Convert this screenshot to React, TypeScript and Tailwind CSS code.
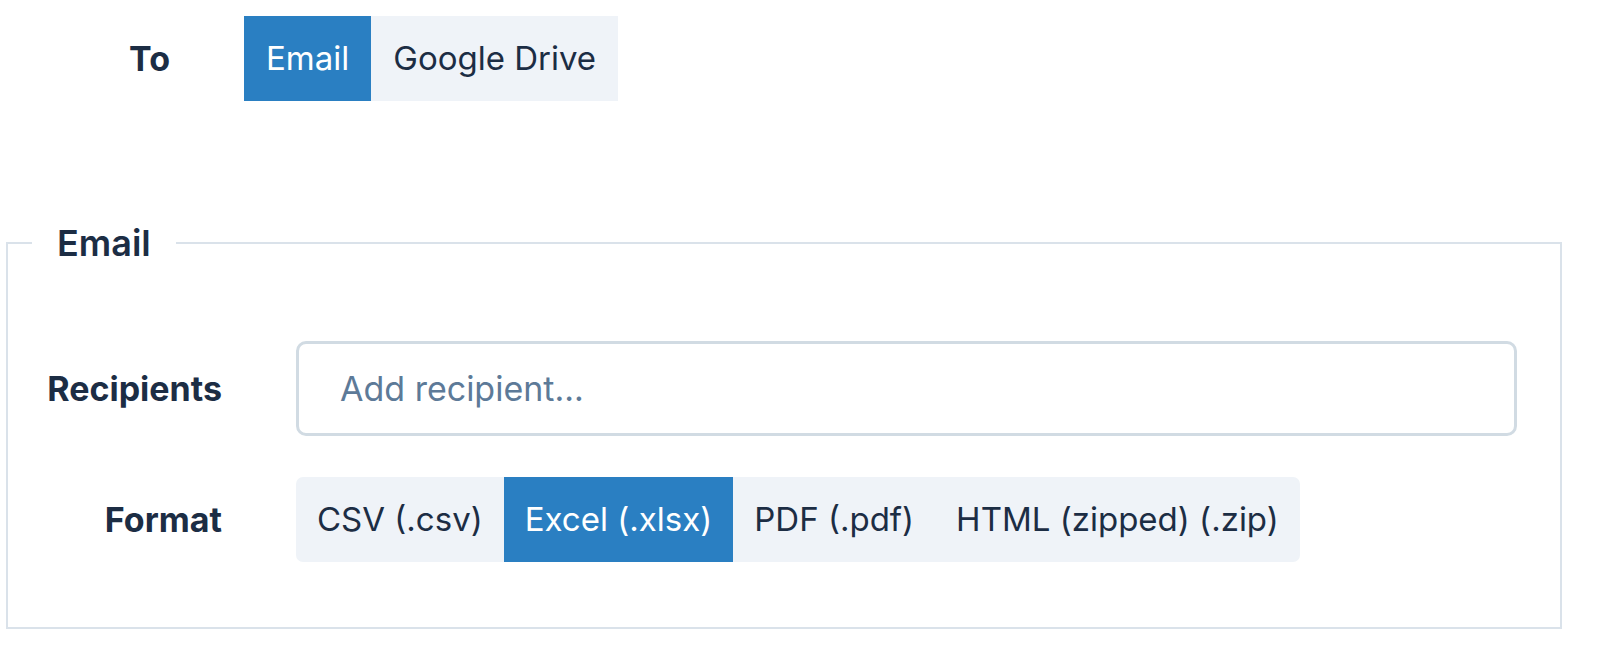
import React, { useState } from 'react';

const font = { fontFamily: 'Inter, "Noto Sans", sans-serif' };

export default function App() {
  const [dest, setDest] = useState('email');
  const [format, setFormat] = useState('xlsx');

  const formats = [
    { id: 'csv', label: 'CSV (.csv)' },
    { id: 'xlsx', label: 'Excel (.xlsx)' },
    { id: 'pdf', label: 'PDF (.pdf)' },
    { id: 'zip', label: 'HTML (zipped) (.zip)' },
  ];

  return (
    <div className="w-[1606px] h-[650px] bg-white text-[#1c2d44]" style={font}>
      {/* Destination */}
      <div className="flex items-center pt-4">
        <div className="w-[170px] text-right text-[34px] font-bold">To</div>
        <div className="ml-[74px] flex">
          <button
            onClick={() => setDest('email')}
            className={`px-[22px] py-[18px] text-[33px] leading-[49px] ${dest === 'email' ? 'bg-[#2a7fc2] text-white' : 'bg-[#eff3f8]'}`}
          >
            Email
          </button>
          <button
            onClick={() => setDest('drive')}
            className={`px-[22px] py-[18px] text-[33px] leading-[49px] ${dest === 'drive' ? 'bg-[#2a7fc2] text-white' : 'bg-[#eff3f8]'}`}
          >
            Google Drive
          </button>
        </div>
      </div>

      {/* Email settings */}
      <fieldset className="ml-[6px] mt-[119px] w-[1556px] border-2 border-[#dae2ea] p-0">
        <legend className="ml-[24px] px-[25px] text-[36px] font-semibold leading-[46px]">Email</legend>

        <div className="pl-[37px] pr-[43px] pt-[75px] pb-[65px]">
          <div className="flex items-center">
            <div className="w-[177px] text-right text-[34px] font-bold">Recipients</div>
            <input
              type="text"
              placeholder="Add recipient..."
              className="ml-[74px] h-[95px] flex-1 rounded-[10px] border-[3px] border-[#d1dbe3] pl-[41px] text-[34px] outline-none placeholder:text-[#5d7a98]"
            />
          </div>

          <div className="mt-[41px] flex items-center">
            <div className="w-[177px] text-right text-[34px] font-bold">Format</div>
            <div className="ml-[74px] flex overflow-hidden rounded-[7px] bg-[#eff3f8]">
              {formats.map((f) => (
                <button
                  key={f.id}
                  onClick={() => setFormat(f.id)}
                  className={`px-[21px] py-[18px] text-[33px] leading-[49px] ${format === f.id ? 'bg-[#2a7fc2] text-white' : ''}`}
                >
                  {f.label}
                </button>
              ))}
            </div>
          </div>
        </div>
      </fieldset>
    </div>
  );
}
